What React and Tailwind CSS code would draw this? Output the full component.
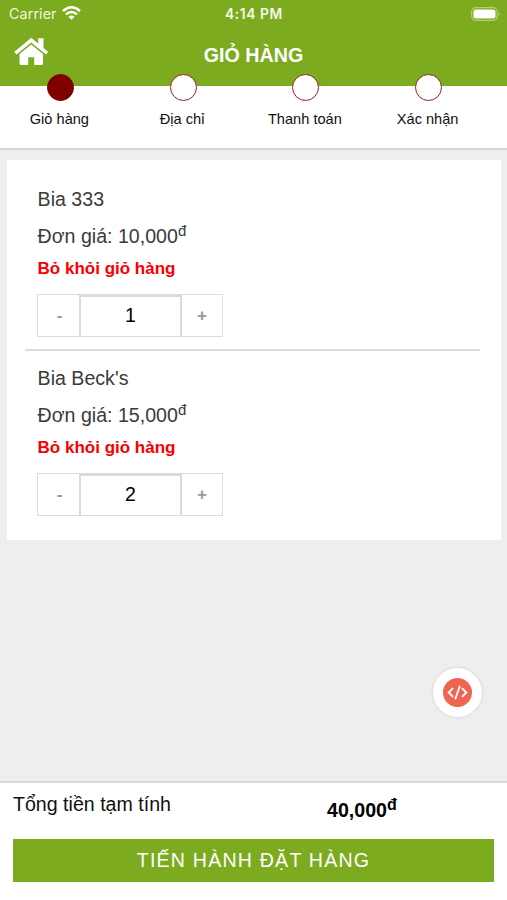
const steps = ['Giỏ hàng', 'Địa chỉ', 'Thanh toán', 'Xác nhận'];
const items = [
  { name: 'Bia 333', price: '10,000', qty: 1 },
  { name: "Bia Beck's", price: '15,000', qty: 2 },
];

function StatusBar() {
  return (
    <div className="grid h-[27px] grid-cols-3 items-center font-['Inter',sans-serif] text-[13.5px] text-white">
      <div className="flex items-center gap-[5px] pl-[9px]">
        <span className="text-[14.3px] tracking-[0.1px] text-[#eef6dd]">Carrier</span>
        <svg className="-mt-[2px] h-[14px] w-[19px]" viewBox="0 0 19 14" fill="none" stroke="white" strokeWidth="2.5">
          <path d="M1 5 Q9.5 -2.4 18 5" />
          <path d="M4 8.4 Q9.5 3.6 15 8.4" />
          <path d="M6.4 10.7 Q9.5 8.2 12.6 10.7 L9.5 13.8 Z" fill="white" stroke="none" />
        </svg>
      </div>
      <div className="pt-[1px] pl-[1px] text-center text-[13.8px] font-semibold tracking-[0.6px] text-[#f6faec]">4:14 PM</div>
      <div className="flex justify-end pr-[6px]">
        <svg className="h-[14px] w-[30px]" viewBox="0 0 30 14">
          <rect x="0.7" y="0.7" width="25.6" height="12.6" rx="4" fill="none" stroke="#b4d275" strokeWidth="1.2" />
          <rect x="2.5" y="2.5" width="22" height="9" rx="2.2" fill="white" />
          <path d="M27.6 5 Q30 7 27.6 9 Z" fill="#b4d275" />
        </svg>
      </div>
    </div>
  );
}

function Header() {
  return (
    <header className="h-[86px] bg-[#7dab1f]">
      <StatusBar />
      <div className="grid grid-cols-[100px_1fr_100px] items-start">
        <svg className="mt-[10px] ml-[14px] h-[29px] w-[35px]" viewBox="0 0 35 29" fill="white">
          <path d="M17.2 0.8 L0.2 14.9 L2.5 17.5 L17.2 5.5 L31.9 17.5 L34.2 14.9 L29.5 10.9 V1.2 H24.2 V6.6 Z" />
          <path d="M17.2 7.4 L5.5 17 V26.6 Q5.5 28 7 28 H14.2 V20.2 H20.2 V28 H27.5 Q29 28 29 26.6 V17 Z" />
        </svg>
        <h1 className="mt-[14px] text-center text-[19.7px] leading-[28px] font-bold text-white">GIỎ HÀNG</h1>
      </div>
    </header>
  );
}

function Steps() {
  return (
    <nav className="h-[64px] border-b-2 border-[#d6d6d6] bg-white">
      <ol className="-mt-[12px] -ml-[2px] grid w-[491px] grid-cols-4">
        {steps.map((label, i) => (
          <li key={label} className="relative flex flex-col items-center">
            <span
              className={`ml-[2px] size-[27px] rounded-full border-[1.5px] ${i === 0 ? 'border-[#800000] bg-[#800000]' : 'border-[#942020] bg-white'}`}
            />
            <span className="mt-[8px] text-[14.6px] leading-[20px] text-[#111]">{label}</span>
          </li>
        ))}
      </ol>
    </nav>
  );
}

function Quantity({ value }) {
  return (
    <div className="flex h-[43px] w-[186px] border border-[#ddd] text-[19.5px]">
      <button className="w-[41px] pl-[2px] text-[17px] font-bold text-[#999]">-</button>
      <div className="flex w-[103px] items-center justify-center border-x-2 border-t-2 border-[#dadada] pb-[1px] text-black">
        {value}
      </div>
      <button className="flex-1 text-[17px] font-bold text-[#999]">+</button>
    </div>
  );
}

function CartItem({ item }) {
  return (
    <article className="px-[12px]">
      <h2 className="pl-[0.6px] text-[19.6px] leading-[36px] text-[#3a3a3a]">{item.name}</h2>
      <p className="h-[38px] pl-[0.6px] text-[19.6px] leading-[38px] text-[#3a3a3a]">
        Đơn giá: {item.price}
        <sup className="-top-[0.48em] text-[15px]">đ</sup>
      </p>
      <button className="block h-[28px] pl-[0.6px] text-[17px] leading-[28px] font-bold text-[#f80000]">Bỏ khỏi giỏ hàng</button>
      <div className="mt-[11px]">
        <Quantity value={item.qty} />
      </div>
    </article>
  );
}

export default function App() {
  return (
    <div className="flex h-[900px] w-[507px] flex-col overflow-hidden bg-[#eee] font-['Liberation_Sans',Arial,sans-serif]">
      <Header />
      <Steps />
      <main className="relative flex-1 pt-[10px]">
        <section className="mr-[6px] ml-[7px] h-[380px] bg-white px-[18px] pt-[21px]">
          <CartItem item={items[0]} />
          <hr className="mt-[12px] mr-[3px] mb-[9px] border-t-2 border-[#ddd]" />
          <CartItem item={items[1]} />
        </section>
        <button className="absolute top-[518px] left-[433px] flex size-[49px] items-center justify-center rounded-full bg-white shadow-[0_0_3px_rgba(0,0,0,0.15)]">
          <svg className="size-[29px]" viewBox="0 0 30 30" fill="none" stroke="white" strokeWidth="2">
            <circle cx="15" cy="15" r="15" fill="#f16450" stroke="none" />
            <path d="M10.4 10.5 L5.9 15 L10.4 19.5 M19.6 10.5 L24.1 15 L19.6 19.5 M17.6 8 L12.6 22" />
          </svg>
        </button>
      </main>
      <footer className="h-[119px] border-t-2 border-[#d9d9d9] bg-white px-[13px]">
        <div className="flex h-[56px] text-[19.6px] text-[#111]">
          <span className="w-[314px] pt-[7px] leading-[28px]">Tổng tiền tạm tính</span>
          <strong className="pt-[13px] leading-[28px] text-black">
            40,000
            <sup className="-top-[0.42em] text-[16px]">đ</sup>
          </strong>
        </div>
        <button className="h-[43px] w-full bg-[#7dab1f] text-[19.6px] tracking-[1.2px] text-white">
          TIẾN HÀNH ĐẶT HÀNG
        </button>
      </footer>
    </div>
  );
}
